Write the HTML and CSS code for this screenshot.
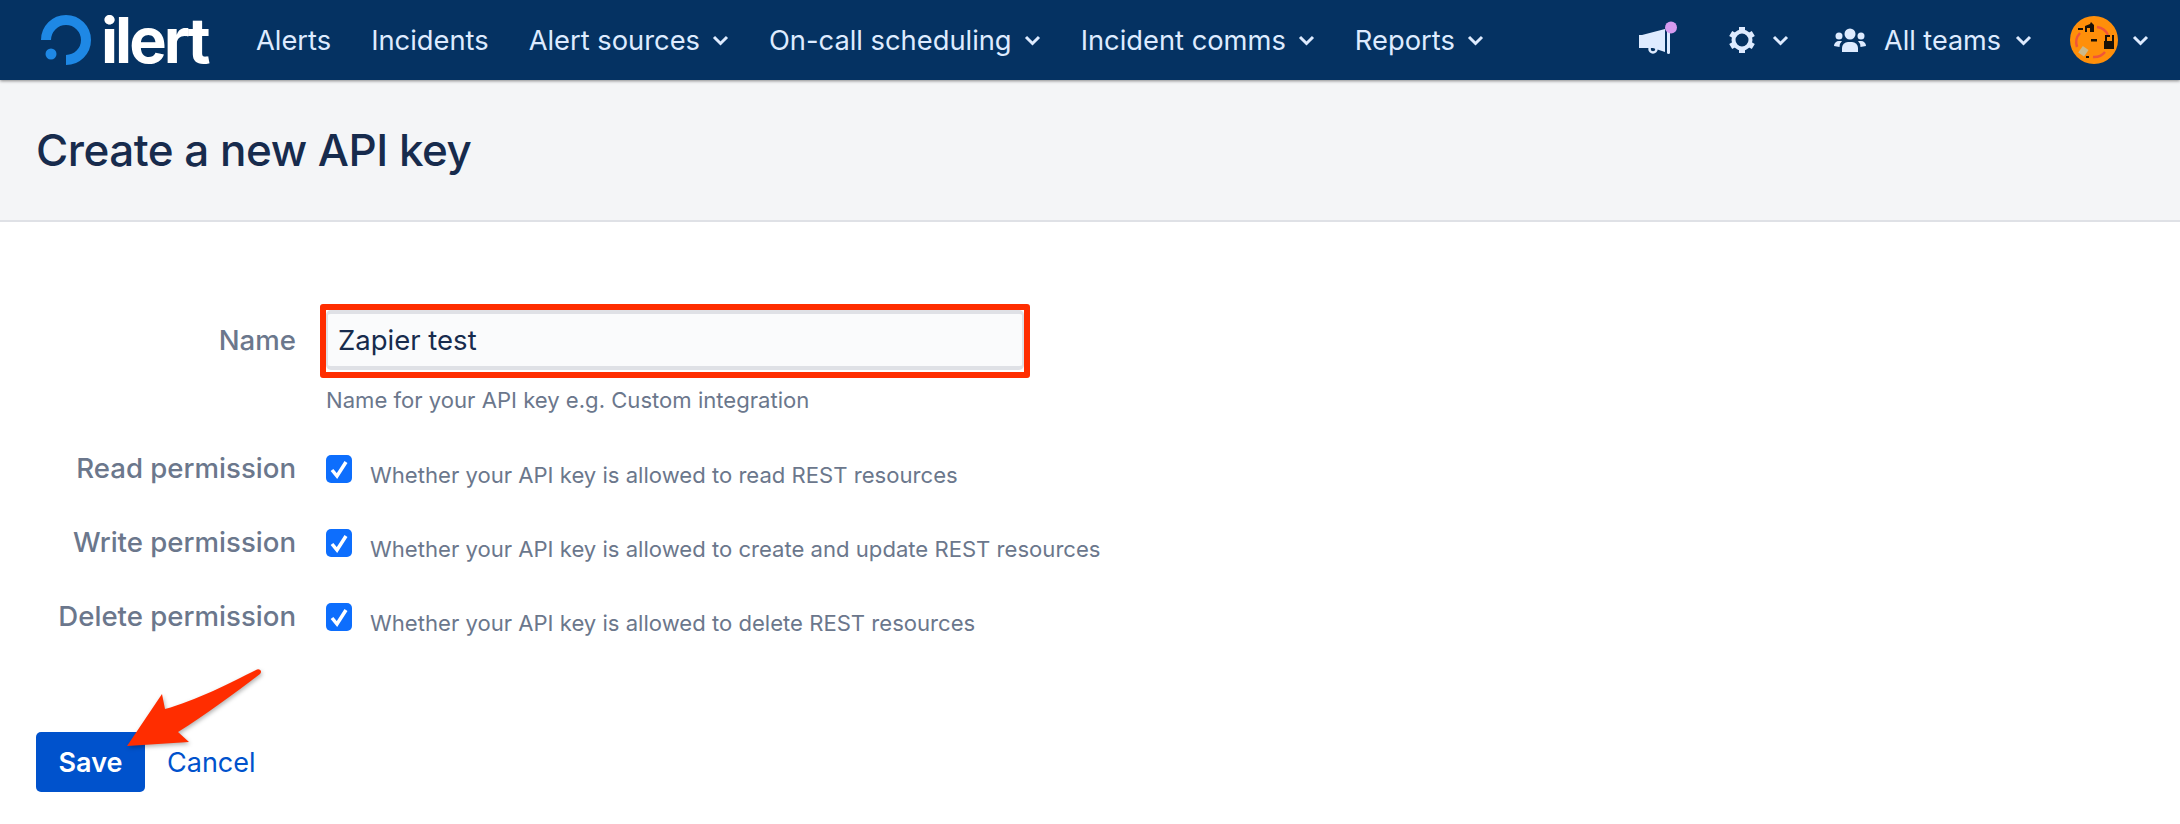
FILE: index.html
```html
<!DOCTYPE html>
<html lang="en">
<head>
    <meta charset="UTF-8">
    <title>Create a new API key</title>
    <link rel="stylesheet" href="styles.css">
</head>
<body>

    <nav class="navbar">
        <a class="logo" href="#">
            <svg class="logo-ring" width="52" height="54" viewBox="0 0 52 54">
                <path d="M6 27 A20 20 0 1 1 26 47" fill="none" stroke="#1e88e5" stroke-width="10"/>
                <circle cx="11" cy="41" r="5.5" fill="#1e88e5"/>
            </svg>
            <span class="logo-text">ilert</span>
        </a>
        <ul class="nav-links">
            <li><a href="#">Alerts</a></li>
            <li><a href="#">Incidents</a></li>
            <li><a href="#">Alert sources<svg class="chevron" viewBox="0 0 17 11"><path d="M2 2l6.5 6.5 6.5-6.5"/></svg></a></li>
            <li><a href="#">On-call scheduling<svg class="chevron" viewBox="0 0 17 11"><path d="M2 2l6.5 6.5 6.5-6.5"/></svg></a></li>
            <li><a href="#">Incident comms<svg class="chevron" viewBox="0 0 17 11"><path d="M2 2l6.5 6.5 6.5-6.5"/></svg></a></li>
            <li><a href="#">Reports<svg class="chevron" viewBox="0 0 17 11"><path d="M2 2l6.5 6.5 6.5-6.5"/></svg></a></li>
        </ul>
        <div class="nav-right">
            <a class="nav-icon news" href="#">
                <svg width="38" height="34" viewBox="0 0 38 34">
                    <path d="M0 14h3l23-6v23l-12-4H3l-3 0z" fill="#deebff"/>
                    <circle cx="14" cy="28" r="3.5" fill="none" stroke="#deebff" stroke-width="2.5"/>
                    <rect x="28" y="8" width="3" height="25" rx="1.5" fill="#deebff"/>
                    <circle cx="32" cy="6.5" r="6" fill="#d59bf0"/>
                </svg>
            </a>
            <a class="nav-icon settings" href="#">
                <svg width="28" height="28" viewBox="0 0 28 28">
                    <circle cx="14" cy="14" r="8.5" fill="none" stroke="#deebff" stroke-width="4"/>
                    <path d="M14 1v5M14 22v5M2.7 7.5l4.3 2.5M21 18l4.3 2.5M2.7 20.5l4.3-2.5M21 10l4.3-2.5" stroke="#deebff" stroke-width="6"/>
                </svg>
                <svg class="chevron" viewBox="0 0 17 11"><path d="M2 2l6.5 6.5 6.5-6.5"/></svg>
            </a>
            <a class="nav-icon teams" href="#">
                <svg width="32" height="24" viewBox="0 0 32 24">
                    <g fill="#deebff">
                        <circle cx="16" cy="6" r="5.5"/>
                        <circle cx="5" cy="8" r="3.5"/>
                        <circle cx="27" cy="8" r="3.5"/>
                        <path d="M8 24v-4a6 6 0 0 1 6-6h4a6 6 0 0 1 6 6v4z"/>
                        <path d="M0 18a5 5 0 0 1 5-5h3a8 8 0 0 0-2.5 6z"/>
                        <path d="M32 18a5 5 0 0 0-5-5h-3a8 8 0 0 1 2.5 6z"/>
                    </g>
                </svg>
                <span>All teams</span>
                <svg class="chevron" viewBox="0 0 17 11"><path d="M2 2l6.5 6.5 6.5-6.5"/></svg>
            </a>
            <a class="nav-icon profile" href="#">
                <svg width="48" height="48" viewBox="0 0 48 48">
                    <circle cx="24" cy="24" r="24" fill="#ff8f0a"/>
                    <g fill="none" stroke="#f0553a" stroke-width="2.5">
                        <path d="M27 11a14 14 0 0 1 11 8"/>
                        <path d="M35 36a14 14 0 0 1-12 5"/>
                        <path d="M7 31a14 14 0 0 1 3-14"/>
                    </g>
                    <g fill="#1a1208">
                        <rect x="8" y="12" width="5" height="2"/>
                        <path d="M15 10l5-2 1-2 3 3v7h-4v-4h-3v4h-2z"/>
                        <rect x="21" y="23" width="6" height="2.5"/>
                        <path d="M35 19h5v2h-3v4h5v-6h2v14H34v-8h1z"/>
                        <rect x="16" y="40" width="3" height="2"/>
                    </g>
                    <rect x="10" y="31" width="7" height="8" fill="#cdb98a" transform="rotate(35 13 35)"/>
                </svg>
                <svg class="chevron" viewBox="0 0 17 11"><path d="M2 2l6.5 6.5 6.5-6.5"/></svg>
            </a>
        </div>
    </nav>

    <header class="page-header">
        <h1>Create a new API key</h1>
    </header>

    <main class="content">
        <form class="key-form">
            <div class="form-row name-row">
                <label class="form-label">Name</label>
                <div class="form-field">
                    <div class="text-input">Zapier test</div>
                    <p class="hint">Name for your API key e.g. Custom integration</p>
                </div>
            </div>
            <div class="form-row check-row">
                <label class="form-label">Read permission</label>
                <div class="form-field check-field">
                    <span class="checkbox"><svg viewBox="0 0 26 28"><path d="M6 15l5 6 9-14"/></svg></span>
                    <span class="hint">Whether your API key is allowed to read REST resources</span>
                </div>
            </div>
            <div class="form-row check-row">
                <label class="form-label">Write permission</label>
                <div class="form-field check-field">
                    <span class="checkbox"><svg viewBox="0 0 26 28"><path d="M6 15l5 6 9-14"/></svg></span>
                    <span class="hint">Whether your API key is allowed to create and update REST resources</span>
                </div>
            </div>
            <div class="form-row check-row">
                <label class="form-label">Delete permission</label>
                <div class="form-field check-field">
                    <span class="checkbox"><svg viewBox="0 0 26 28"><path d="M6 15l5 6 9-14"/></svg></span>
                    <span class="hint">Whether your API key is allowed to delete REST resources</span>
                </div>
            </div>
            <div class="form-actions">
                <button class="btn-primary" type="button">Save</button>
                <a class="btn-link" href="#">Cancel</a>
            </div>
        </form>
    </main>

    <!-- screenshot annotations -->
    <div class="mark-box"></div>
    <svg class="mark-arrow" width="145" height="90" viewBox="0 0 145 90">
        <path d="M136 5C139 3 143 6 140 9C115 28 85 50 58 67L69 77L7 81L42 29L45 44C75 36 110 18 136 5Z" fill="#ff2d00"/>
    </svg>

</body>
</html>
```

FILE: styles.css
```css
* {
    box-sizing: border-box;
}
body {
    margin: 0;
    font-family: Inter, "Noto Sans", sans-serif;
    background-color: #fff;
    color: #172b4d;
    height: 824px;
    overflow: hidden;
    position: relative;
}
a {
    text-decoration: none;
    color: inherit;
}

/* top bar */
.navbar {
    height: 80px;
    background-color: #053262;
    box-shadow: 0 1px 3px rgba(0, 0, 0, 0.45);
    display: flex;
    align-items: center;
    padding-left: 40px;
    color: #deebff;
    font-size: 27.3px;
    position: relative;
}
.logo {
    display: flex;
    align-items: center;
    gap: 9px;
    width: 216px;
}
.logo-text {
    color: #fff;
    font-weight: 700;
    font-size: 63px;
    line-height: 60px;
    letter-spacing: -3px;
}
.nav-links {
    display: flex;
    gap: 40px;
    list-style: none;
    margin: 0;
    padding: 0;
}
.nav-links a {
    display: flex;
    align-items: center;
}
.chevron {
    width: 17px;
    height: 11px;
    margin-left: 12px;
    fill: none;
    stroke: #deebff;
    stroke-width: 3;
}
.nav-right {
    margin-left: auto;
    display: flex;
    align-items: center;
    padding-right: 31px;
    font-size: 27px;
}
.nav-icon {
    display: flex;
    align-items: center;
}
.news {
    margin-right: 51px;
    margin-top: -4px;
}
.settings {
    margin-right: 45px;
}
.settings .chevron {
    margin-left: 16px;
}
.teams {
    margin-right: 38px;
}
.teams svg:first-child {
    margin-right: 18px;
}
.teams .chevron {
    margin-left: 14px;
}
.profile .chevron {
    margin-left: 14px;
}

/* page title */
.page-header {
    height: 142px;
    background-color: #f4f5f7;
    border-bottom: 2px solid #dfe1e6;
    padding: 42px 36px 0;
}
h1 {
    margin: 0;
    font-size: 44px;
    line-height: 56px;
    font-weight: 500;
    letter-spacing: -0.5px;
    color: #172b4d;
}

/* form */
.content {
    padding: 88px 36px 0;
}
.form-row {
    display: flex;
}
.form-label {
    width: 260px;
    text-align: right;
    color: #6b778c;
    font-size: 27.6px;
    font-weight: 500;
    line-height: 36px;
}
.form-field {
    margin-left: 30px;
}
.name-row .form-label {
    padding-top: 12px;
}
.check-row .form-label {
    margin-top: -1px;
}
.text-input {
    width: 698px;
    height: 60px;
    background-color: #fafbfc;
    border: 2px solid #dfe1e6;
    border-width: 4px 2px;
    border-radius: 5px;
    padding: 0 10px;
    font-size: 27.5px;
    line-height: 52px;
    color: #172b4d;
}
.hint {
    margin: 0;
    color: #6b778c;
    font-size: 22.1px;
    line-height: 30px;
}
.name-row .hint {
    margin-top: 15px;
}
.name-row {
    margin-bottom: 36px;
}
.check-row {
    height: 74px;
}
.check-field {
    display: flex;
    align-items: flex-start;
    gap: 18px;
}
.checkbox {
    width: 26px;
    height: 28px;
    background-color: #0d6efd;
    border-radius: 5px;
    margin-top: 4px;
}
.checkbox svg {
    display: block;
    fill: none;
    stroke: #fff;
    stroke-width: 3.5;
}
.check-field .hint {
    margin-top: 9px;
}
.form-actions {
    display: flex;
    align-items: center;
    gap: 22px;
    margin-top: 59px;
}
.btn-primary {
    width: 109px;
    height: 60px;
    background-color: #0052cc;
    border: none;
    border-radius: 5px;
    color: #fff;
    font-family: inherit;
    font-size: 27px;
    font-weight: 600;
}
.btn-link {
    color: #0052cc;
    font-size: 27px;
}

/* annotations over the page */
.mark-box {
    position: absolute;
    left: 320px;
    top: 304px;
    width: 710px;
    height: 74px;
    border: 6px solid #ff2d00;
    border-radius: 3px;
}
.mark-arrow {
    position: absolute;
    left: 120px;
    top: 665px;
    overflow: visible;
    filter: drop-shadow(1px 2px 2px rgba(0, 0, 0, 0.3));
}
```
